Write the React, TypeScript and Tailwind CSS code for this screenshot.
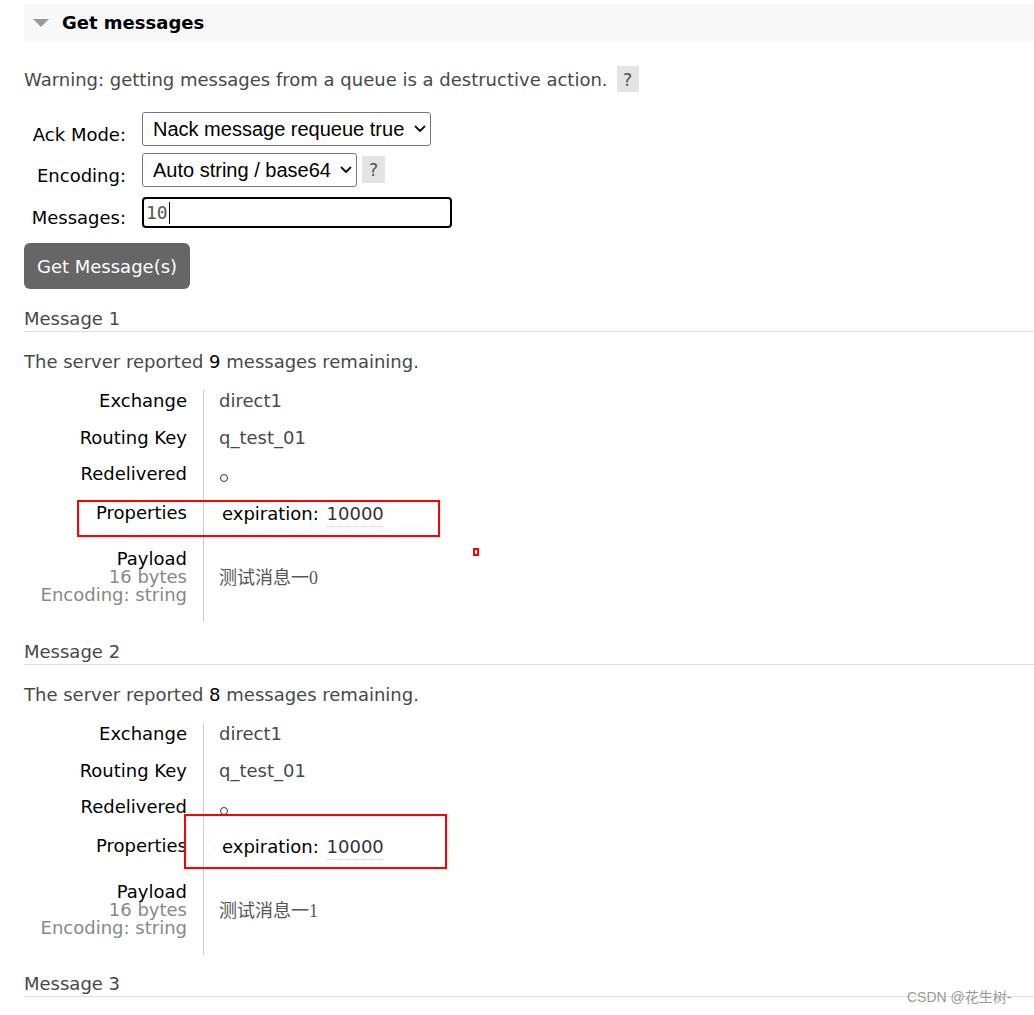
import React from 'react';

type Msg = {
    index: number;
    remaining: number;
    payload: string;
};

const messages: Msg[] = [
    { index: 1, remaining: 9, payload: '测试消息一0' },
    { index: 2, remaining: 8, payload: '测试消息一1' },
];

function Chevron() {
    return (
        <svg width="12" height="8" viewBox="0 0 12 8" className="pointer-events-none absolute right-[5px] top-1/2 -translate-y-1/2">
            <path d="M1.5 1.5 L6 6 L10.5 1.5" fill="none" stroke="#111" strokeWidth="1.8" strokeLinecap="round" strokeLinejoin="round" />
        </svg>
    );
}

function HelpBox({ className }: { className: string }) {
    return (
        <span className={`flex items-center justify-center bg-[#e4e4e4] text-[#555] ${className}`}>?</span>
    );
}

function MessageBlock({ msg }: { msg: Msg }) {
    return (
        <div>
            <div className="mt-[19px] border-b border-[#dddddd] pb-[1px] leading-[22px] text-[#484848]">
                Message {msg.index}
            </div>
            <p className="mt-[19px] leading-[22px] text-[#484848]">
                The server reported <span className="text-black">{msg.remaining}</span> messages remaining.
            </p>

            <div className="relative mt-[17px]">
                <div className="flex h-[37px] leading-[22px]">
                    <div className="w-[179px] pr-4 text-right text-black">Exchange</div>
                    <div className="flex-1 border-l border-[#cccccc] pl-[15px] text-[#484848]">direct1</div>
                </div>
                <div className="flex h-[36px] leading-[22px]">
                    <div className="w-[179px] pr-4 text-right text-black">Routing Key</div>
                    <div className="flex-1 border-l border-[#cccccc] pl-[15px] text-[#484848]">q_test_01</div>
                </div>
                <div className="flex h-[39px] leading-[22px]">
                    <div className="w-[179px] pr-4 text-right text-black">Redelivered</div>
                    <div className="flex-1 border-l border-[#cccccc] pl-[16px] pt-[11px]">
                        <span className="block h-[8px] w-[8px] rounded-full border border-[#333]" />
                    </div>
                </div>
                <div className="flex h-[46px] leading-[22px]">
                    <div className="w-[179px] pr-4 text-right text-black">Properties</div>
                    <div className="flex-1 border-l border-[#cccccc] pl-[18px] text-black">
                        expiration:{' '}
                        <span className="ml-[2px] inline-block border-b border-dotted border-[#ccc] leading-[24px] text-[#333]">10000</span>
                    </div>
                </div>
                <div className="flex h-[74px] leading-[18px]">
                    <div className="w-[179px] pr-4 pt-[2px] text-right">
                        <div className="text-black">Payload</div>
                        <div className="text-[#888]">16 bytes</div>
                        <div className="text-[#888]">Encoding: string</div>
                    </div>
                    <div className="flex flex-1 items-center border-l border-[#cccccc] pb-[14px] pl-[15px] font-['Liberation_Serif','Noto_Sans_CJK_SC',serif] text-[18px] text-[#555]">
                        {msg.payload}
                    </div>
                </div>

                {msg.index === 1 ? (
                    <>
                        <div className="absolute left-[53px] top-[110px] h-[37px] w-[363px] border-2 border-[#f00]" />
                        <div className="absolute left-[449px] top-[158px] h-[8px] w-[6px] border-2 border-[#f00]" />
                    </>
                ) : (
                    <div className="absolute left-[160px] top-[91px] h-[55px] w-[263px] border-2 border-[#f00]" />
                )}
            </div>
        </div>
    );
}

export default function App() {
    return (
        <div className="relative h-[1015px] overflow-hidden bg-white pl-6 pt-[4px] font-['DejaVu_Sans','Noto_Sans_CJK_SC',sans-serif] text-[18px]">
            {/* section header */}
            <div className="flex h-[37px] items-center bg-[#f8f8f8] pl-[9px]">
                <svg width="16" height="8" viewBox="0 0 16 8">
                    <path d="M0 0 H16 L8 8 Z" fill="#999" />
                </svg>
                <h2 className="ml-[13px] text-[18px] font-bold text-black">Get messages</h2>
            </div>

            <div className="mt-[25px] flex h-[26px] items-center text-[#484848]">
                <span>Warning: getting messages from a queue is a destructive action.</span>
                <HelpBox className="ml-[9px] h-[26px] w-[22px]" />
            </div>

            {/* form */}
            <div className="mt-[20px] flex items-end">
                <label className="w-[102px] text-right leading-[22px] text-black">Ack Mode:</label>
                <div className="relative ml-4">
                    <select className="h-[34px] w-[289px] appearance-none rounded-[3px] border border-[#767676] bg-white pl-[10px] font-['Liberation_Sans',sans-serif] text-[20px] text-black">
                        <option>Nack message requeue true</option>
                    </select>
                    <Chevron />
                </div>
            </div>
            <div className="mt-[7px] flex items-end">
                <label className="w-[102px] text-right leading-[22px] text-black">Encoding:</label>
                <div className="relative ml-4">
                    <select className="h-[34px] w-[215px] appearance-none rounded-[3px] border border-[#767676] bg-white pl-[10px] font-['Liberation_Sans',sans-serif] text-[20px] text-black">
                        <option>Auto string / base64</option>
                    </select>
                    <Chevron />
                </div>
                <HelpBox className="mb-[4px] ml-[5px] h-[27px] w-[23px]" />
            </div>
            <div className="mt-[10px] flex items-end">
                <label className="mb-[-1px] w-[102px] text-right leading-[22px] text-black">Messages:</label>
                <div className="ml-4 flex h-[31px] w-[310px] items-center rounded-[4px] border-2 border-black pl-[2px] font-['DejaVu_Sans_Mono',monospace] text-[18px] text-[#555]">
                    10
                    <span className="ml-[1px] h-[22px] w-[1px] bg-black" />
                </div>
            </div>

            <button className="mt-[15px] h-[46px] w-[166px] rounded-[6px] bg-[#666] text-[18px] text-white">
                Get Message(s)
            </button>

            {messages.map(m => (
                <MessageBlock key={m.index} msg={m} />
            ))}

            <div className="mt-[18px] border-b border-[#dddddd] pb-[1px] leading-[22px] text-[#484848]">
                Message 3
            </div>

            <div className="absolute left-[907px] top-[988px] font-['Liberation_Sans','Noto_Sans_CJK_SC',sans-serif] text-[14px] leading-[18px] text-[#999]">
                CSDN @花生树-
            </div>
        </div>
    );
}
